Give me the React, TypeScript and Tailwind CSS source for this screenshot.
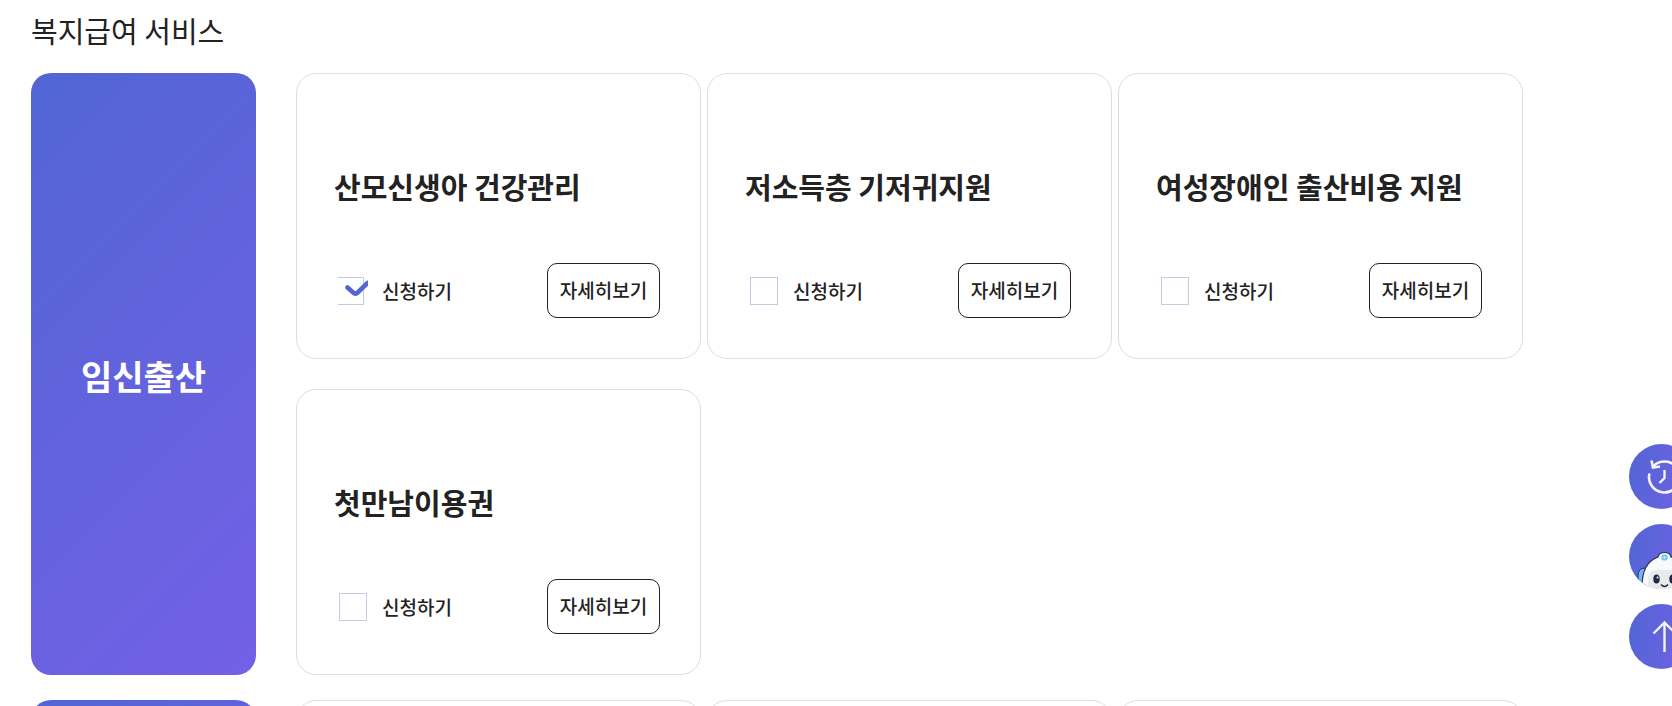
import { useId, useState } from "react";

type Service = {
  name: string;
  applied?: boolean;
};

const services: Service[] = [
  { name: "산모신생아 건강관리", applied: true },
  { name: "저소득층 기저귀지원" },
  { name: "여성장애인 출산비용 지원" },
  { name: "첫만남이용권" },
];

function ApplyCheckbox({ defaultChecked = false }: { defaultChecked?: boolean }) {
  const id = useId();
  const [checked, setChecked] = useState(defaultChecked);

  return (
    <div className="flex items-center gap-3.5">
      <div className="relative w-[30px] h-7">
        <input
          id={id}
          type="checkbox"
          checked={checked}
          onChange={(e) => setChecked(e.target.checked)}
          className="block appearance-none w-full h-full cursor-pointer"
        />
        <svg
          viewBox="0 0 30 28"
          className="absolute inset-0 w-full h-full pointer-events-none"
          fill="none"
          aria-hidden="true"
        >
          {checked ? (
            <>
              <path d="M0 .5H25.5V27.5H0" stroke="#c5cae3" />
              <path
                d="M9.5 10.5L16 16.2Q17.5 17.3 19 16.2L29.5 6"
                stroke="#5466d6"
                strokeWidth="4.6"
                strokeLinecap="round"
              />
            </>
          ) : (
            <rect x="1.5" y=".5" width="27" height="27" stroke="#c5cae3" />
          )}
        </svg>
      </div>
      <label htmlFor={id} className="text-[19px] leading-7 font-medium cursor-pointer">
        신청하기
      </label>
    </div>
  );
}

function ServiceCard({ service }: { service: Service }) {
  return (
    <li className="flex flex-col h-[286px] pl-[37px] pr-10 pb-10 border border-[#ddd] rounded-[20px]">
      <h3 className="mt-[90px] text-[29px] leading-[44px] font-bold whitespace-nowrap">{service.name}</h3>
      <div className="flex items-center justify-between mt-auto pl-1">
        <ApplyCheckbox defaultChecked={service.applied} />
        <button
          type="button"
          className="w-[113px] h-[55px] border border-[#222] rounded-[10px] text-[19px] font-medium whitespace-nowrap"
        >
          자세히보기
        </button>
      </div>
    </li>
  );
}

function HistoryIcon() {
  return (
    <svg viewBox="0 0 65 65" className="w-full h-full" fill="none" stroke="#f4f4ff" aria-hidden="true">
      <path d="M20.4 29.5A15.5 15.5 0 1 0 35.5 17.5Q29 17.5 24.5 22" strokeWidth="2.6" />
      <path d="M22.5 16.5L24 23.5L31 22.5" strokeWidth="2.6" />
      <path d="M35.5 26V34L30.5 39" strokeWidth="2.4" />
    </svg>
  );
}

function RobotIcon() {
  return (
    <svg viewBox="0 0 65 65" className="w-full h-full" aria-hidden="true">
      <path d="M16 44Q9 44 9 52V60H18Z" fill="#71b8f3" stroke="#26345f" strokeWidth="1" />
      <path d="M55 44Q62 44 62 52V60H53Z" fill="#71b8f3" stroke="#26345f" strokeWidth="1" />
      <path
        d="M13 66Q12 39 29 33Q30 28.5 35.5 28.5Q41 28.5 42 33Q59 39 58 66Z"
        fill="#f8f9fa"
        stroke="#26345f"
        strokeWidth="1.2"
      />
      <rect x="32.5" y="30.5" width="6" height="6" rx="2" fill="#73c5f7" />
      <rect x="34.5" y="32.5" width="2" height="2" fill="#d9f2ff" />
      <path d="M19 65V55Q19 46 29 46H42Q52 46 52 55V65Z" fill="#e9ebea" />
      <ellipse cx="27.5" cy="55" rx="3.2" ry="4.5" fill="#1f294c" />
      <ellipse cx="43.5" cy="55" rx="3.2" ry="4.5" fill="#1f294c" />
      <circle cx="28.5" cy="53.5" r="1" fill="#fff" />
      <circle cx="44.5" cy="53.5" r="1" fill="#fff" />
      <path d="M32 60.5Q35.5 64.5 39 60.5" fill="none" stroke="#1f294c" strokeWidth="1.5" />
    </svg>
  );
}

function ArrowUpIcon() {
  return (
    <svg viewBox="0 0 65 65" className="w-full h-full" fill="none" stroke="#f4f4ff" aria-hidden="true">
      <path d="M35.5 48V18.5M24.5 29.5L35.5 18.5L46.5 29.5" strokeWidth="2.4" />
    </svg>
  );
}

const quickMenu = [
  { label: "최근 본 서비스", icon: <HistoryIcon /> },
  { label: "챗봇", icon: <RobotIcon /> },
  { label: "맨 위로", icon: <ArrowUpIcon /> },
];

export default function App() {
  return (
    <div className="h-screen overflow-hidden bg-white text-[#222] font-['Noto_Sans_CJK_KR',sans-serif]">
      <main className="pl-[31px] pr-[149px] pt-2">
        <h1 className="mb-[21px] text-[29px] leading-[44px]">복지급여 서비스</h1>

        <section className="flex gap-10">
          <h2 className="flex items-center justify-center shrink-0 w-[225px] pt-0.5 rounded-[20px] bg-linear-135 from-[#5065d4] to-[#7360e6] text-white text-[34px] font-bold">
            임신출산
          </h2>
          <ul className="grid grid-cols-3 flex-1 gap-x-1.5 gap-y-[30px]">
            {services.map((service) => (
              <ServiceCard key={service.name} service={service} />
            ))}
          </ul>
        </section>

        <section className="flex gap-10 mt-[25px]">
          <div className="shrink-0 w-[225px] rounded-[20px] bg-linear-135 from-[#5065d4] to-[#7360e6]" />
          <ul className="grid grid-cols-3 flex-1 gap-x-1.5">
            {[0, 1, 2].map((i) => (
              <li key={i} className="h-[286px] border border-[#ddd] rounded-[20px]" />
            ))}
          </ul>
        </section>
      </main>

      <aside className="fixed -right-[22px] bottom-[37px] flex flex-col gap-[15px]">
        {quickMenu.map((item) => (
          <button
            key={item.label}
            type="button"
            aria-label={item.label}
            className="w-[65px] h-[65px] rounded-full overflow-hidden bg-linear-100 from-[#5065d4] to-[#7360e6]"
          >
            {item.icon}
          </button>
        ))}
      </aside>
    </div>
  );
}
